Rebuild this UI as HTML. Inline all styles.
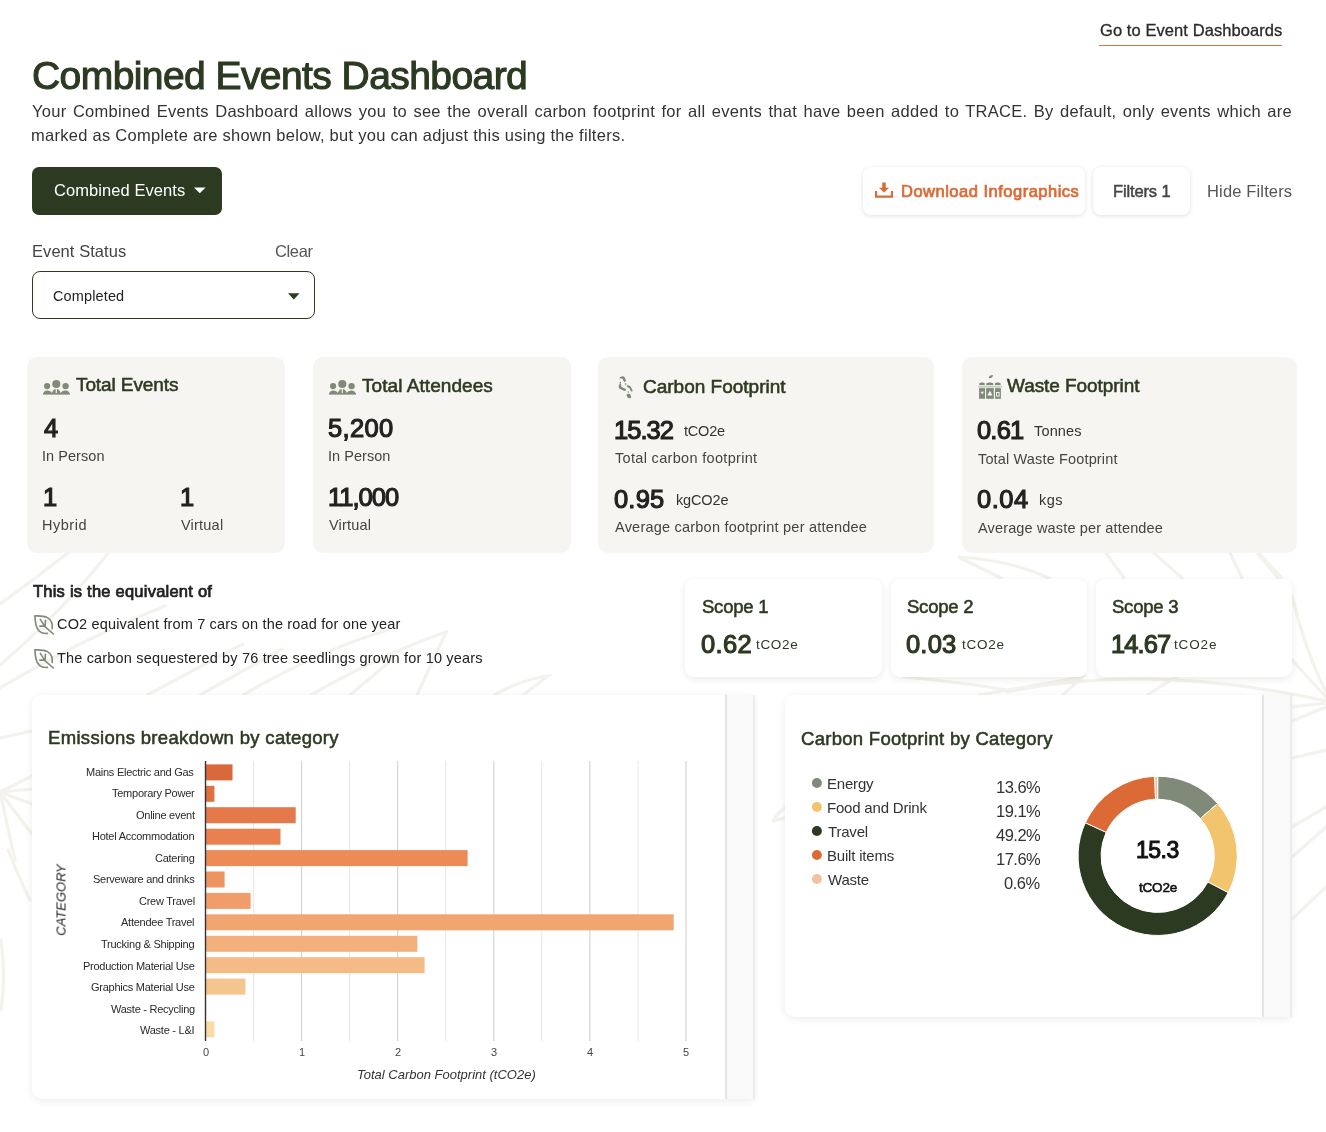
<!DOCTYPE html>
<html><head><meta charset="utf-8">
<style>
*{margin:0;padding:0;box-sizing:border-box}
html,body{width:1326px;height:1132px;overflow:hidden;background:#fff}
body{position:relative;font-family:"Liberation Sans",sans-serif;color:#333}
.t{position:absolute;white-space:nowrap;line-height:1;will-change:transform}
.a{position:absolute}
.card{position:absolute;background:#f6f5f1;border-radius:10px}
.scope{position:absolute;background:#fff;border-radius:9px;box-shadow:0 2px 7px rgba(60,50,30,0.10)}
.btnw{position:absolute;background:#fff;border-radius:8px;box-shadow:0 1px 4px rgba(0,0,0,0.13)}
.panel{position:absolute;background:#fff;border-radius:10px 0 0 10px;box-shadow:0 2px 8px rgba(0,0,0,0.08)}
.strip{position:absolute;background:#f9f9f9;border-left:2px solid #e4e4e4;border-right:2px solid #ececec}
</style></head>
<body>
<svg class="a" style="left:0;top:0" width="1326" height="1132"><g fill="none" stroke="#f4f2ed" stroke-width="3.2" stroke-linecap="round">
<path d="M0 604Q40 575 69 552"/>
<path d="M0 665Q62 612 109 552"/>
<path d="M0 688Q80 640 165 606"/>
<path d="M147 695L243 644"/>
<path d="M200 695L282 649"/>
<path d="M243 695Q320 650 388 630"/>
<path d="M311 695Q380 655 446 632L417 695"/>
<path d="M350 695L393 659"/>
<path d="M494 695Q520 680 548 676L523 695"/>
<path d="M0 738L32 731"/>
<path d="M0 792L32 776M0 792L32 789M0 792L32 804M0 792L32 834M0 792L15 860"/>
<path d="M8 850Q20 880 30 900"/>
<path d="M1 940Q6 975 1 1010"/>
<path d="M1258 552L1281 577"/>
<path d="M1292 596Q1305 650 1326 692"/>
<path d="M1292 660L1326 697"/>
<path d="M1007 692Q1150 662 1326 701"/>
<path d="M1292 707L1326 703M1292 721L1326 707"/>
<path d="M1292 758L1326 750M1292 827L1326 807M1292 857L1326 827M1292 919L1326 887"/>
<path d="M1049 578Q1010 560 958 557L1001 578"/>
<path d="M1106 553L1124 578M1154 553L1182 578M1230 553L1242 578M1257 553L1278 578"/>
<path d="M979 695L1082 677L1063 695M1147 695L1176 677"/>
<path d="M904 677Q960 682 1007 690"/>
<path d="M773 821Q779 811 785 808M773 821L785 818"/>
</g></svg>

<div class="a" style="left:1099px;top:44.5px;width:183px;height:1.5px;background:#e0703f"></div>
<div class="t" id="p1" style="left:32px;top:102.7px;font-size:16.5px;color:#333;width:1260px;text-align:justify;text-align-last:justify;letter-spacing:0.27px;">Your Combined Events Dashboard allows you to see the overall carbon footprint for all events that have been added to TRACE. By default, only events which are</div>

<div class="a" style="left:32px;top:167px;width:190px;height:48px;background:#2c3a22;border-radius:7px"></div>
<svg class="a" style="left:194px;top:187px" width="12" height="7"><path d="M0 0.5H11.6L5.8 6.3Z" fill="#fff"/></svg>

<div class="btnw" style="left:863px;top:167px;width:222px;height:48px"></div>
<svg class="a" style="left:875px;top:182px" width="18" height="16" viewBox="0 0 18 16"><path d="M7.2 0.5h3.6v5.2h3.3L9 10.6 3.9 5.7h3.3z" fill="#dc6a36"/><path d="M1 9v5.6h16V9" fill="none" stroke="#dc6a36" stroke-width="2.2"/></svg>
<div class="btnw" style="left:1093px;top:167px;width:97px;height:48px"></div>

<div class="a" style="left:32px;top:271px;width:283px;height:48px;border:1px solid #2c3a22;border-radius:8px"></div>
<svg class="a" style="left:288px;top:292.5px" width="12" height="7"><path d="M0 0.3H11.6L5.8 6.5Z" fill="#2c3a22"/></svg>

<div class="card" style="left:27px;top:357px;width:258px;height:196px"></div>
<div class="card" style="left:313px;top:357px;width:258px;height:196px"></div>
<div class="card" style="left:598px;top:357px;width:336px;height:196px"></div>
<div class="card" style="left:962px;top:357px;width:335px;height:196px"></div>
<svg class="a" style="left:0;top:0;pointer-events:none" width="1326" height="1132">
<defs>
<g id="ppl" fill="#7f8b78">
<circle cx="4.1" cy="6.5" r="3.1"/>
<circle cx="13.3" cy="4.4" r="4.05"/>
<circle cx="22.6" cy="6.5" r="3.2"/>
<path d="M0.1 14.7C0.3 12.3 2 10.8 4.2 10.8S8.3 11.8 8.9 13.6C9.3 11.3 10.6 9.6 12.7 9.3V14.7Z"/>
<path d="M13.9 9.3C16 9.6 17.3 11.3 17.8 13.6C18.4 11.8 20.2 10.8 22.5 10.8S26.5 12.3 26.8 14.7H13.9Z"/>
<rect x="0" y="13.3" width="27" height="1.6" rx="0.6"/>
</g>
<g id="leaf" fill="none" stroke="#7f8b78" stroke-width="1.6" stroke-linecap="round" stroke-linejoin="round">
<path d="M13.5 18.4C11.5 18.7 8 18.5 5.2 16.1C2 13.3 1.2 9.2 0.9 0.9C5.5 0.7 9.8 0.6 13.4 2.6C17.6 5 18.9 9.2 18.1 13.7"/>
<path d="M6.3 4.4L10.9 11.6L19.4 19M11.4 5.2L11.1 11.6M5.8 11.1H10.9"/>
</g>
</defs>
<use href="#ppl" x="43" y="379.6"/>
<use href="#ppl" x="329" y="379.6"/>
<use href="#leaf" x="34" y="615"/>
<use href="#leaf" x="34" y="649"/>
<!-- footprints -->
<g fill="#7f8b78">
<path d="M619.2 378.3C620.5 376.2 623.6 375.4 624.6 377.2L625.9 380.3C626.2 381.6 624.6 382.4 623.9 381.6L622.4 378.7C621.5 378.2 620.2 378.9 619.2 378.3Z"/>
<ellipse cx="620.3" cy="382.7" rx="0.8" ry="0.9"/>
<path d="M619.6 384C618.4 385.5 618.2 387.4 619.7 388.8L623.8 390.8C625.3 391.5 626.6 390.1 625.8 389L621.7 387C621 386.4 621.3 385.3 621 384.5C620.7 383.8 620.1 383.5 619.6 384Z"/>
<ellipse cx="625.6" cy="384" rx="1.2" ry="0.8" transform="rotate(25 625.6 384)" opacity="0.7"/>
<path d="M626.8 385.4C628.8 384.8 630.5 385.8 631.2 387.6L632.6 390.5C632.8 391.6 631.4 391.9 630.9 391.3L629.4 388.3C628.7 387.2 626.8 387.4 626.8 385.4Z"/>
<ellipse cx="628.3" cy="392" rx="0.7" ry="0.8"/>
<path d="M627.5 393.9C628.9 393.3 630.4 393.8 630.8 395.2L631.2 397.4C630.6 398.4 628.3 398.4 627.6 397.4L626.6 395.5C626.3 394.8 626.8 394.1 627.5 393.9Z"/>
</g>
<!-- waste bins -->
<g fill="#7f8b78">
<path d="M988.8 378.3C988.6 376.3 990.3 375 992.9 375.1C992.9 377.4 991.3 378.6 988.8 378.3Z"/>
<path d="M979.3 385.1V383.2L981.3 382.4H982.7L984.7 383.2V385.1Z"/>
<path d="M986.3 385.1V383.2L988.7 382.4H990.8L993.2 383.2V385.1Z"/>
<path d="M994.9 385.1V383.2L996.8 382.4H998.4L1000.6 383.2V385.1Z"/>
<rect x="978.2" y="385.8" width="23.6" height="1.7" fill="#c4c9bf"/>
<rect x="979.1" y="388.1" width="5.9" height="10.7"/>
<rect x="986.1" y="388.1" width="7.7" height="10.7"/>
<rect x="995" y="388.1" width="5.9" height="10.7"/>
</g>
<g fill="#f6f5f1">
<path d="M980.5 392.3L981.5 391.5L982 392.6L983 390.9L983.8 392.3L982.3 394.3Z"/>
<path d="M987.3 395.5L989.9 390.8L992.6 395.5Z"/>
<rect x="996" y="392" width="3.6" height="4.6"/>
</g>
<rect x="997" y="393" width="1.6" height="2.6" fill="#7f8b78"/>
</svg>


<div class="scope" style="left:685px;top:579px;width:197px;height:98px"></div>
<div class="scope" style="left:890.5px;top:579px;width:196.5px;height:98px"></div>
<div class="scope" style="left:1095.5px;top:579px;width:196px;height:98px"></div>

<div class="panel" style="left:32px;top:695px;width:722px;height:404px"></div>
<div class="strip" style="left:725px;top:695px;width:30px;height:404px"></div>
<div class="panel" style="left:785px;top:695px;width:506px;height:322px"></div>
<div class="strip" style="left:1262px;top:695px;width:30px;height:322px"></div>
<svg class="a" style="left:0;top:0" width="1326" height="1132">
<rect x="253.1" y="761" width="1" height="280" fill="#e6e6e6"/>
<rect x="301.1" y="761" width="1" height="280" fill="#cccccc"/>
<rect x="349.1" y="761" width="1" height="280" fill="#e6e6e6"/>
<rect x="397.2" y="761" width="1" height="280" fill="#cccccc"/>
<rect x="445.2" y="761" width="1" height="280" fill="#e6e6e6"/>
<rect x="493.3" y="761" width="1" height="280" fill="#cccccc"/>
<rect x="541.3" y="761" width="1" height="280" fill="#e6e6e6"/>
<rect x="589.4" y="761" width="1" height="280" fill="#cccccc"/>
<rect x="637.5" y="761" width="1" height="280" fill="#e6e6e6"/>
<rect x="685.5" y="761" width="1" height="280" fill="#cccccc"/>
<rect x="205.5" y="764.4" width="27.0" height="16" fill="#d9683a"/>
<rect x="205.5" y="785.8" width="8.9" height="16" fill="#df703f"/>
<rect x="205.5" y="807.2" width="90.2" height="16" fill="#e57949"/>
<rect x="205.5" y="828.7" width="75.0" height="16" fill="#e8804f"/>
<rect x="205.5" y="850.1" width="262.1" height="16" fill="#ec8a58"/>
<rect x="205.5" y="871.5" width="19.1" height="16" fill="#ee9462"/>
<rect x="205.5" y="892.9" width="45.1" height="16" fill="#f09d6b"/>
<rect x="205.5" y="914.3" width="468.2" height="16" fill="#f1a672"/>
<rect x="205.5" y="935.8" width="211.9" height="16" fill="#f3b07c"/>
<rect x="205.5" y="957.2" width="219.1" height="16" fill="#f4bb86"/>
<rect x="205.5" y="978.6" width="39.9" height="16" fill="#f5c590"/>
<rect x="205.5" y="1000.0" width="0.8" height="16" fill="#f7d09b"/>
<rect x="205.5" y="1021.4" width="8.9" height="16" fill="#f8dba6"/>
<rect x="204.8" y="761" width="1.4" height="280" fill="#333"/>
</svg>
<div class="t" style="left:61.4px;top:899.7px;font-size:13px;font-style:italic;color:#222;transform:translate(-50%,-50%) rotate(-90deg);">CATEGORY</div>
<svg class="a" style="left:0;top:0" width="1326" height="1132"><path d="M1157.70 776.20A79.6 79.6 0 0 1 1217.69 803.48L1200.36 818.60A56.6 56.6 0 0 0 1157.70 799.20Z" fill="#7f8b78" stroke="#fff" stroke-width="1"/><path d="M1217.69 803.48A79.6 79.6 0 0 1 1228.24 892.68L1207.86 882.02A56.6 56.6 0 0 0 1200.36 818.60Z" fill="#f2c46d" stroke="#fff" stroke-width="1"/><path d="M1228.24 892.68A79.6 79.6 0 0 1 1085.29 822.73L1106.21 832.29A56.6 56.6 0 0 0 1207.86 882.02Z" fill="#2b3a20" stroke="#fff" stroke-width="1"/><path d="M1085.29 822.73A79.6 79.6 0 0 1 1154.70 776.26L1155.57 799.24A56.6 56.6 0 0 0 1106.21 832.29Z" fill="#dc6a36" stroke="#fff" stroke-width="1"/><path d="M1154.70 776.26A79.6 79.6 0 0 1 1157.70 776.20L1157.70 799.20A56.6 56.6 0 0 0 1155.57 799.24Z" fill="#f2c19d" stroke="#fff" stroke-width="1"/>
<circle cx="816.9" cy="783" r="5" fill="#7f8b78"/>
<circle cx="816.9" cy="807" r="5" fill="#f2c46d"/>
<circle cx="816.9" cy="831" r="5" fill="#2b3a20"/>
<circle cx="816.9" cy="855" r="5" fill="#dc6a36"/>
<circle cx="816.9" cy="879" r="5" fill="#f2c19d"/>
</svg>
<div class="t" id="link" style="left:1099.5px;top:22.1px;font-size:16.5px;color:#2a2a2a;letter-spacing:0.08px;-webkit-text-stroke:0.3px #2a2a2a;">Go to Event Dashboards</div>
<div class="t" id="title" style="left:32.0px;top:56.0px;font-size:39px;color:#2c3a22;letter-spacing:-0.57px;-webkit-text-stroke:1.1px #2c3a22;">Combined Events Dashboard</div>
<div class="t" id="p2" style="left:31.0px;top:126.9px;font-size:16.5px;color:#333;letter-spacing:0.27px;">marked as Complete are shown below, but you can adjust this using the filters.</div>
<div class="t" id="btn" style="left:54.0px;top:182.0px;font-size:16.5px;color:#fff;letter-spacing:0.07px;">Combined Events</div>
<div class="t" id="dl" style="left:900.5px;top:183.2px;font-size:16.5px;color:#dc6a36;letter-spacing:0.50px;-webkit-text-stroke:0.74px #dc6a36;">Download Infographics</div>
<div class="t" id="flt" style="left:1112.8px;top:183.2px;font-size:16.5px;color:#444;letter-spacing:-0.14px;-webkit-text-stroke:0.49px #444;">Filters 1</div>
<div class="t" id="hide" style="left:1206.5px;top:183.2px;font-size:16.5px;color:#555;letter-spacing:0.15px;">Hide Filters</div>
<div class="t" id="es" style="left:31.9px;top:243.4px;font-size:16.5px;color:#444;letter-spacing:0.06px;">Event Status</div>
<div class="t" id="clear" style="left:274.9px;top:243.4px;font-size:16.5px;color:#555;letter-spacing:-0.36px;">Clear</div>
<div class="t" id="comp" style="left:53.4px;top:289.0px;font-size:14.5px;color:#222;letter-spacing:0.13px;">Completed</div>
<div class="t" id="c1t" style="left:75.8px;top:375.1px;font-size:19px;color:#2c3a22;letter-spacing:-0.10px;-webkit-text-stroke:0.57px #2c3a22;">Total Events</div>
<div class="t" id="c1n" style="left:43.6px;top:415.8px;font-size:25.5px;color:#222;-webkit-text-stroke:1.15px #222;">4</div>
<div class="t" id="c1l" style="left:42.2px;top:448.7px;font-size:14.5px;color:#444;letter-spacing:0.05px;">In Person</div>
<div class="t" id="c1h1" style="left:42.6px;top:484.6px;font-size:25.5px;color:#222;-webkit-text-stroke:1.15px #222;">1</div>
<div class="t" id="c1h" style="left:42.2px;top:517.5px;font-size:14.5px;color:#444;letter-spacing:0.51px;">Hybrid</div>
<div class="t" id="c1v1" style="left:179.5px;top:484.6px;font-size:25.5px;color:#222;-webkit-text-stroke:1.15px #222;">1</div>
<div class="t" id="c1v" style="left:180.5px;top:517.5px;font-size:14.5px;color:#444;letter-spacing:0.21px;">Virtual</div>
<div class="t" id="c2t" style="left:361.5px;top:375.6px;font-size:19px;color:#2c3a22;letter-spacing:0.06px;-webkit-text-stroke:0.57px #2c3a22;">Total Attendees</div>
<div class="t" id="c2n" style="left:328.2px;top:415.7px;font-size:25.5px;color:#222;letter-spacing:0.37px;-webkit-text-stroke:1.15px #222;">5,200</div>
<div class="t" id="c2l" style="left:328.2px;top:448.9px;font-size:14.5px;color:#444;letter-spacing:0.04px;">In Person</div>
<div class="t" id="c2n2" style="left:328.2px;top:484.9px;font-size:25.5px;color:#222;letter-spacing:-0.98px;-webkit-text-stroke:1.15px #222;">11,000</div>
<div class="t" id="c2v" style="left:329.2px;top:517.8px;font-size:14.5px;color:#444;letter-spacing:0.20px;">Virtual</div>
<div class="t" id="c3t" style="left:643.2px;top:376.7px;font-size:19px;color:#2c3a22;-webkit-text-stroke:0.57px #2c3a22;">Carbon Footprint</div>
<div class="t" id="c3n" style="left:614.0px;top:418.0px;font-size:25.5px;color:#222;letter-spacing:-0.98px;-webkit-text-stroke:1.15px #222;">15.32</div>
<div class="t" id="c3u" style="left:684.0px;top:424.2px;font-size:14.5px;color:#333;letter-spacing:-0.19px;">tCO2e</div>
<div class="t" id="c3l" style="left:615.4px;top:451.3px;font-size:14.5px;color:#444;letter-spacing:0.32px;">Total carbon footprint</div>
<div class="t" id="c3n2" style="left:614.0px;top:486.6px;font-size:25.5px;color:#222;letter-spacing:0.18px;-webkit-text-stroke:1.15px #222;">0.95</div>
<div class="t" id="c3u2" style="left:675.6px;top:492.5px;font-size:14.5px;color:#333;letter-spacing:-0.15px;">kgCO2e</div>
<div class="t" id="c3l2" style="left:615.4px;top:519.7px;font-size:14.5px;color:#444;letter-spacing:0.22px;">Average carbon footprint per attendee</div>
<div class="t" id="c4t" style="left:1007.0px;top:376.4px;font-size:19px;color:#2c3a22;letter-spacing:-0.06px;-webkit-text-stroke:0.57px #2c3a22;">Waste Footprint</div>
<div class="t" id="c4n" style="left:977.0px;top:417.5px;font-size:25.5px;color:#222;letter-spacing:-0.82px;-webkit-text-stroke:1.15px #222;">0.61</div>
<div class="t" id="c4u" style="left:1033.6px;top:424.3px;font-size:14.5px;color:#333;letter-spacing:0.16px;">Tonnes</div>
<div class="t" id="c4l" style="left:978.0px;top:451.6px;font-size:14.5px;color:#444;letter-spacing:0.15px;">Total Waste Footprint</div>
<div class="t" id="c4n2" style="left:977.0px;top:487.2px;font-size:25.5px;color:#222;letter-spacing:0.48px;-webkit-text-stroke:1.15px #222;">0.04</div>
<div class="t" id="c4u2" style="left:1039.0px;top:492.5px;font-size:14.5px;color:#333;letter-spacing:0.44px;">kgs</div>
<div class="t" id="c4l2" style="left:978.0px;top:520.7px;font-size:14.5px;color:#444;letter-spacing:0.15px;">Average waste per attendee</div>
<div class="t" id="eqh" style="left:32.6px;top:583.1px;font-size:16.5px;color:#222;letter-spacing:0.23px;-webkit-text-stroke:0.74px #222;">This is the equivalent of</div>
<div class="t" id="eq1" style="left:56.7px;top:616.6px;font-size:14.5px;color:#222;letter-spacing:0.16px;">CO2 equivalent from 7 cars on the road for one year</div>
<div class="t" id="eq2" style="left:56.7px;top:650.5px;font-size:14.5px;color:#222;letter-spacing:0.17px;">The carbon sequestered by 76 tree seedlings grown for 10 years</div>
<div class="t" id="s0t" style="left:701.6px;top:597.7px;font-size:18.5px;color:#2c3a22;letter-spacing:-0.23px;-webkit-text-stroke:0.55px #2c3a22;">Scope 1</div>
<div class="t" id="s0n" style="left:700.6px;top:631.6px;font-size:25.5px;color:#2c3a22;letter-spacing:0.38px;-webkit-text-stroke:1.15px #2c3a22;">0.62</div>
<div class="t" id="s0u" style="left:755.6px;top:638.4px;font-size:13.5px;color:#2c3a22;letter-spacing:0.67px;">tCO2e</div>
<div class="t" id="s1t" style="left:906.5px;top:597.7px;font-size:18.5px;color:#2c3a22;letter-spacing:-0.23px;-webkit-text-stroke:0.55px #2c3a22;">Scope 2</div>
<div class="t" id="s1n" style="left:905.5px;top:631.6px;font-size:25.5px;color:#2c3a22;letter-spacing:0.18px;-webkit-text-stroke:1.15px #2c3a22;">0.03</div>
<div class="t" id="s1u" style="left:961.5px;top:638.4px;font-size:13.5px;color:#2c3a22;letter-spacing:0.75px;">tCO2e</div>
<div class="t" id="s2t" style="left:1111.5px;top:597.7px;font-size:18.5px;color:#2c3a22;letter-spacing:-0.23px;-webkit-text-stroke:0.55px #2c3a22;">Scope 3</div>
<div class="t" id="s2n" style="left:1110.5px;top:631.6px;font-size:25.5px;color:#2c3a22;letter-spacing:-0.91px;-webkit-text-stroke:1.15px #2c3a22;">14.67</div>
<div class="t" id="s2u" style="left:1174.0px;top:638.4px;font-size:13.5px;color:#2c3a22;letter-spacing:0.87px;">tCO2e</div>
<div class="t" id="ch1t" style="left:47.5px;top:729.3px;font-size:18.5px;color:#2c3a22;letter-spacing:0.33px;-webkit-text-stroke:0.55px #2c3a22;">Emissions breakdown by category</div>
<div class="t" id="lab0" style="left:86.4px;top:766.6px;font-size:11px;color:#2a2a2a;letter-spacing:-0.25px;">Mains Electric and Gas</div>
<div class="t" id="lab1" style="left:111.7px;top:788.1px;font-size:11px;color:#2a2a2a;letter-spacing:-0.25px;">Temporary Power</div>
<div class="t" id="lab2" style="left:135.7px;top:809.7px;font-size:11px;color:#2a2a2a;letter-spacing:-0.25px;">Online event</div>
<div class="t" id="lab3" style="left:91.7px;top:831.2px;font-size:11px;color:#2a2a2a;letter-spacing:-0.25px;">Hotel Accommodation</div>
<div class="t" id="lab4" style="left:155.0px;top:852.8px;font-size:11px;color:#2a2a2a;letter-spacing:-0.25px;">Catering</div>
<div class="t" id="lab5" style="left:92.6px;top:874.3px;font-size:11px;color:#2a2a2a;letter-spacing:-0.25px;">Serveware and drinks</div>
<div class="t" id="lab6" style="left:138.8px;top:895.9px;font-size:11px;color:#2a2a2a;letter-spacing:-0.25px;">Crew Travel</div>
<div class="t" id="lab7" style="left:121.4px;top:917.4px;font-size:11px;color:#2a2a2a;letter-spacing:-0.25px;">Attendee Travel</div>
<div class="t" id="lab8" style="left:101.3px;top:939.0px;font-size:11px;color:#2a2a2a;letter-spacing:-0.25px;">Trucking &amp; Shipping</div>
<div class="t" id="lab9" style="left:82.9px;top:960.5px;font-size:11px;color:#2a2a2a;letter-spacing:-0.25px;">Production Material Use</div>
<div class="t" id="lab10" style="left:91.0px;top:982.1px;font-size:11px;color:#2a2a2a;letter-spacing:-0.25px;">Graphics Material Use</div>
<div class="t" id="lab11" style="left:110.6px;top:1003.6px;font-size:11px;color:#2a2a2a;letter-spacing:-0.25px;">Waste - Recycling</div>
<div class="t" id="lab12" style="left:140.2px;top:1025.2px;font-size:11px;color:#2a2a2a;letter-spacing:-0.25px;">Waste - L&amp;I</div>
<div class="t" id="tk0" style="left:202.5px;top:1047.0px;font-size:11px;color:#444;">0</div>
<div class="t" id="tk1" style="left:298.5px;top:1047.0px;font-size:11px;color:#444;">1</div>
<div class="t" id="tk2" style="left:394.5px;top:1047.0px;font-size:11px;color:#444;">2</div>
<div class="t" id="tk3" style="left:491.0px;top:1047.0px;font-size:11px;color:#444;">3</div>
<div class="t" id="tk4" style="left:587.0px;top:1047.0px;font-size:11px;color:#444;">4</div>
<div class="t" id="tk5" style="left:683.0px;top:1047.0px;font-size:11px;color:#444;">5</div>
<div class="t" id="axt" style="left:356.9px;top:1067.9px;font-size:13px;color:#333;font-style:italic;">Total Carbon Footprint (tCO2e)</div>
<div class="t" id="ch2t" style="left:801.0px;top:729.9px;font-size:18.5px;color:#2c3a22;letter-spacing:0.29px;-webkit-text-stroke:0.55px #2c3a22;">Carbon Footprint by Category</div>
<div class="t" id="lg0" style="left:826.5px;top:775.9px;font-size:15px;color:#333;letter-spacing:-0.2px;">Energy</div>
<div class="t" id="pc0" style="left:995.7px;top:779.0px;font-size:16.5px;color:#333;letter-spacing:-0.5px;">13.6%</div>
<div class="t" id="lg1" style="left:826.5px;top:799.9px;font-size:15px;color:#333;letter-spacing:-0.2px;">Food and Drink</div>
<div class="t" id="pc1" style="left:995.7px;top:803.0px;font-size:16.5px;color:#333;letter-spacing:-0.5px;">19.1%</div>
<div class="t" id="lg2" style="left:827.5px;top:823.9px;font-size:15px;color:#333;letter-spacing:-0.2px;">Travel</div>
<div class="t" id="pc2" style="left:995.7px;top:827.0px;font-size:16.5px;color:#333;letter-spacing:-0.5px;">49.2%</div>
<div class="t" id="lg3" style="left:826.5px;top:847.9px;font-size:15px;color:#333;letter-spacing:-0.2px;">Built items</div>
<div class="t" id="pc3" style="left:995.7px;top:851.0px;font-size:16.5px;color:#333;letter-spacing:-0.5px;">17.6%</div>
<div class="t" id="lg4" style="left:827.5px;top:871.9px;font-size:15px;color:#333;letter-spacing:-0.2px;">Waste</div>
<div class="t" id="pc4" style="left:1004.4px;top:875.0px;font-size:16.5px;color:#333;letter-spacing:-0.5px;">0.6%</div>
<div class="t" id="dn" style="left:1136.3px;top:838.5px;font-size:23px;color:#111;-webkit-text-stroke:1.03px #111;letter-spacing:-0.5px;">15.3</div>
<div class="t" id="du" style="left:1139.1px;top:880.6px;font-size:13.5px;color:#111;-webkit-text-stroke:0.61px #111;letter-spacing:-0.2px;">tCO2e</div>
</body></html>
